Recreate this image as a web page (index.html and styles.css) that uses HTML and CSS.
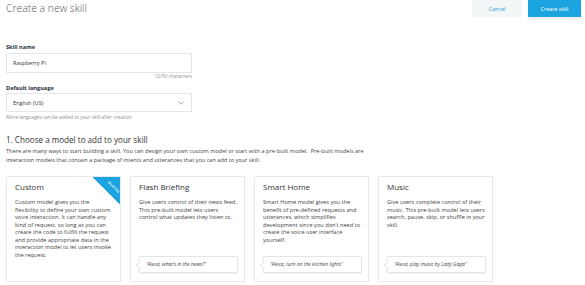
FILE: index.html
```html
<!DOCTYPE html>
<html>
<head>
<meta charset="utf-8">
<link rel="stylesheet" href="styles.css">
</head>
<body>
<div class="page">
  <header class="top">
    <h1 class="title">Create a new skill</h1>
    <div class="actions">
      <button class="btn btn-cancel">Cancel</button>
      <button class="btn btn-primary">Create skill</button>
    </div>
  </header>

  <div class="form">
    <label class="label">Skill name</label>
    <div class="input">Raspberry Pi</div>
    <div class="counter">12/50 characters</div>

    <label class="label label-lang">Default language</label>
    <div class="input select">
      <span>English (US)</span>
      <svg class="chev" width="6" height="4" viewBox="0 0 6 4"><path d="M0.5 0.8 L3 3.2 L5.5 0.8" fill="none" stroke="#8a8f94" stroke-width="0.8"/></svg>
    </div>
    <div class="hint">More languages can be added to your skill after creation</div>
  </div>

  <h2 class="section">1. Choose a model to add to your skill</h2>
  <p class="intro">There are many ways to start building a skill. You can design your own custom model or start with a pre-built model.&nbsp; Pre-built models are interaction models that contain a package of intents and utterances that you can add to your skill.</p>

  <div class="cards">
    <div class="card selected">
      <div class="ribbon"><span>SELECTED</span></div>
      <h3 class="card-title">Custom</h3>
      <p class="card-text">Custom model gives you the flexibility to define your own custom voice interaction. It can handle any kind of request, so long as you can create the code to fulfill the request and provide appropriate data in the interaction model to let users invoke the request.</p>
    </div>
    <div class="card">
      <h3 class="card-title">Flash Briefing</h3>
      <p class="card-text">Give users control of their news feed. This pre-built model lets users control what updates they listen to.</p>
      <div class="bubble">“Alexa, what’s in the news?”</div>
    </div>
    <div class="card">
      <h3 class="card-title">Smart Home</h3>
      <p class="card-text">Smart Home model gives you the benefit of pre-defined requests and utterances, which simplifies development since you don’t need to create the voice user interface yourself.</p>
      <div class="bubble">“Alexa, turn on the kitchen lights”</div>
    </div>
    <div class="card">
      <h3 class="card-title">Music</h3>
      <p class="card-text">Give users complete control of their music. This pre-built model lets users search, pause, skip, or shuffle in your skill.</p>
      <div class="bubble">“Alexa, play music by Lady Gaga”</div>
    </div>
  </div>
</div>
</body>
</html>
```

FILE: styles.css
```css
* { box-sizing: border-box; }
html, body { margin: 0; padding: 0; background: #fff; }
body { font-family: "Open Sans", "Liberation Sans", sans-serif; color: #444; }

.page { padding: 0 4px 0 6px; }

.top { display: flex; justify-content: space-between; align-items: flex-start; height: 17px; }
.title { margin: 0; font-weight: 300; font-size: 10.4px; line-height: 16px; color: #555; }
.actions { display: flex; gap: 6px; }
.btn { border: 0; font-family: inherit; font-size: 5.5px; height: 17px; padding: 0; cursor: pointer; }
.btn-cancel { width: 50px; background: #f3f6f7; color: #1a9fd9; }
.btn-primary { width: 53px; background: #1ba4df; color: #fff; box-shadow: 0 2px 3px rgba(0,0,0,0.08); }

.form { width: 186px; margin-top: 26px; display: flex; flex-direction: column; }
.label { font-size: 5.6px; font-weight: 700; line-height: 8px; color: #232f3e; }
.label-lang { margin-top: 5px; }
.input { margin-top: 2px; height: 20px; border: 1px solid #e3e6e8; padding: 0 6px; font-size: 5.6px; line-height: 18px; color: #333; display: flex; align-items: center; justify-content: space-between; }
.select { margin-top: 1px; height: 19px; }
.chev { margin-right: 1px; }
.counter { text-align: right; font-size: 4.8px; line-height: 6px; color: #8a8f94; }
.hint { margin-top: 1px; font-size: 4.8px; line-height: 8px; color: #8a8f94; }

.section { margin: 13px 0 0; font-size: 8.1px; font-weight: 400; line-height: 11px; color: #333; }
.intro { margin: 2px 0 0; width: 375px; font-size: 5.6px; line-height: 9px; color: #444; }

.cards { margin-top: 11px; display: flex; gap: 9px; }
.card { position: relative; width: 115px; height: 106px; border: 1px solid #e8eaeb; box-shadow: 0 1px 2px rgba(0,0,0,0.05); padding: 4px 6px 8px 8px; display: flex; flex-direction: column; overflow: hidden; }
.card.selected .card-text { padding-right: 1px; }
.card-title { margin: 0; font-size: 8px; font-weight: 400; line-height: 11px; color: #333; }
.card-text { margin: 7px 0 0; font-size: 5.65px; line-height: 7.5px; color: #444; }
.bubble { margin-top: auto; position: relative; height: 17px; border: 1px solid #e3e6e8; border-radius: 1px; box-shadow: 0 1px 2px rgba(0,0,0,0.06); padding: 0 6px; font-size: 5px; font-style: italic; line-height: 15px; color: #444; white-space: nowrap; }
.bubble::before { content: ""; position: absolute; left: -3px; top: 5px; width: 5px; height: 5px; background: #fff; border-left: 1px solid #e3e6e8; border-bottom: 1px solid #e3e6e8; transform: rotate(45deg); }

.ribbon { position: absolute; top: 0; right: 0; width: 28px; height: 27px; background: linear-gradient(to bottom left, #1ba4df 50%, transparent 50%); }
.ribbon span { position: absolute; top: 8px; right: -1px; transform: rotate(45deg); font-size: 3px; font-weight: 700; color: #fff; letter-spacing: 0.1px; }
```
